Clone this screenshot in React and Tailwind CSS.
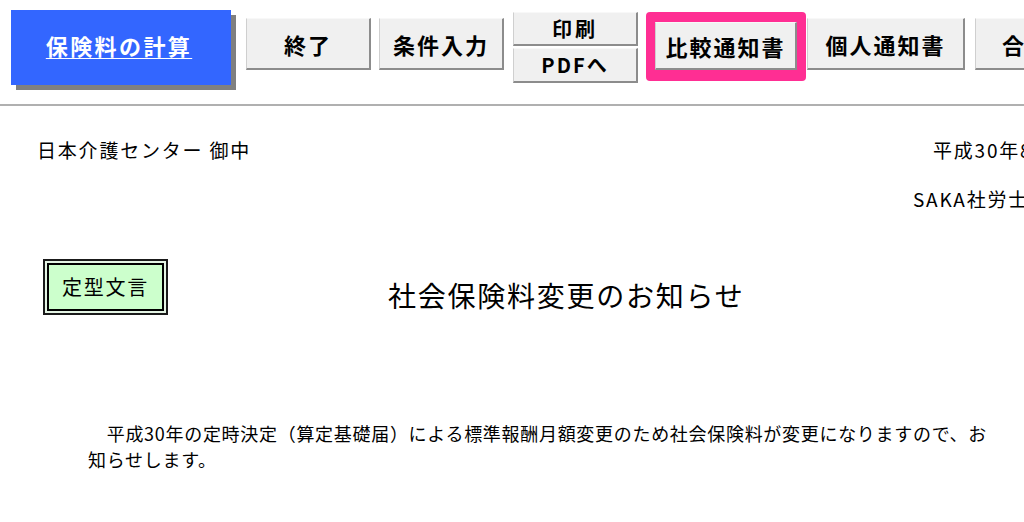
import React from "react";

const jp = { fontFamily: '"Noto Sans CJK JP", "Noto Sans", sans-serif' };

function Btn({ className = "", children }) {
  return (
    <div
      className={
        "shrink-0 flex items-center justify-center bg-[#f0f0f0] border-t border-l border-t-[#f8f8f8] border-l-[#cfcfcf] border-r-2 border-b-2 border-r-[#8c8c8c] border-b-[#8c8c8c] font-bold text-black whitespace-nowrap " +
        className
      }
    >
      {children}
    </div>
  );
}

export default function App() {
  return (
    <div className="relative w-[1024px] h-[522px] overflow-hidden bg-white text-black" style={jp}>
      {/* toolbar */}
      <div className="flex items-start h-[104px] whitespace-nowrap">
        <div className="shrink-0 ml-[11px] mt-[10px] w-[220px] h-[75px] bg-[#3366ff] shadow-[5px_5px_0_#808080] flex items-center justify-center pb-[6px] pr-[4px]">
          <span className="text-white font-bold text-[22px] leading-[26px] tracking-[2.4px] underline underline-offset-[3px] decoration-1">
            保険料の計算
          </span>
        </div>
        <Btn className="ml-[15px] mt-[18px] w-[125px] h-[52px] text-[22px] leading-[26px] tracking-[2px]">
          終了
        </Btn>
        <Btn className="ml-[8px] mt-[18px] w-[125px] h-[52px] text-[22px] leading-[26px] tracking-[2px]">
          条件入力
        </Btn>
        <div className="shrink-0 ml-[9px] mt-[12px] w-[125px] flex flex-col gap-[2px]">
          <Btn className="h-[34px] text-[20px] leading-[24px] tracking-[3px]">印刷</Btn>
          <Btn className="h-[35px] text-[20px] leading-[24px] tracking-[2px]">PDFへ</Btn>
        </div>
        <div className="shrink-0 ml-[8px] mt-[12px] w-[160px] h-[69px] bg-[#ff2e93] rounded-[4px] pl-[9px] pr-[9px] pt-[10px] pb-[11px]">
          <Btn className="w-full h-full text-[22px] leading-[26px] tracking-[2px]">比較通知書</Btn>
        </div>
        <Btn className="ml-[1px] mt-[18px] w-[158px] h-[52px] text-[22px] leading-[26px] tracking-[2px]">
          個人通知書
        </Btn>
        <Btn className="ml-[10px] mt-[18px] w-[125px] h-[52px] text-[22px] leading-[26px] tracking-[2px] justify-start pl-[26px]">
          合計
        </Btn>
      </div>
      <div className="h-[2px] bg-[#b0b0b0]" />

      {/* header rows */}
      <div className="mt-[30px] h-[28px] flex items-center whitespace-nowrap text-[19px] leading-[28px] tracking-[1.8px]">
        <div className="shrink-0 w-[933px] pl-[37px]">日本介護センター 御中</div>
        <div className="shrink-0">平成30年8月1日</div>
      </div>
      <div className="mt-[21px] h-[28px] flex items-center whitespace-nowrap text-[19px] leading-[28px] tracking-[1.8px]">
        <div className="shrink-0 w-[913px]" />
        <div className="shrink-0">SAKA社労士事務所</div>
      </div>

      {/* title row */}
      <div className="mt-[46px] flex items-start whitespace-nowrap">
        <div className="shrink-0 ml-[43px] w-[125px] h-[56px] border-2 border-[#1a1a1a] p-[2px] bg-[#e4f4e4]">
          <div className="w-full h-full border-2 border-black bg-[#ccffcc] flex items-center justify-center text-[20px] leading-[24px] tracking-[1.7px]">
            定型文言
          </div>
        </div>
        <div className="shrink-0 ml-[220px] mt-[22px] text-[28px] leading-[28px] tracking-[1.75px]">
          社会保険料変更のお知らせ
        </div>
      </div>

      {/* paragraph */}
      <div className="mt-[105px] pl-[88px] text-[18px] leading-[26px] tracking-[0.7px] whitespace-nowrap">
        <div>　平成30年の定時決定（算定基礎届）による標準報酬月額変更のため社会保険料が変更になりますので、お</div>
        <div>知らせします。</div>
      </div>
    </div>
  );
}
